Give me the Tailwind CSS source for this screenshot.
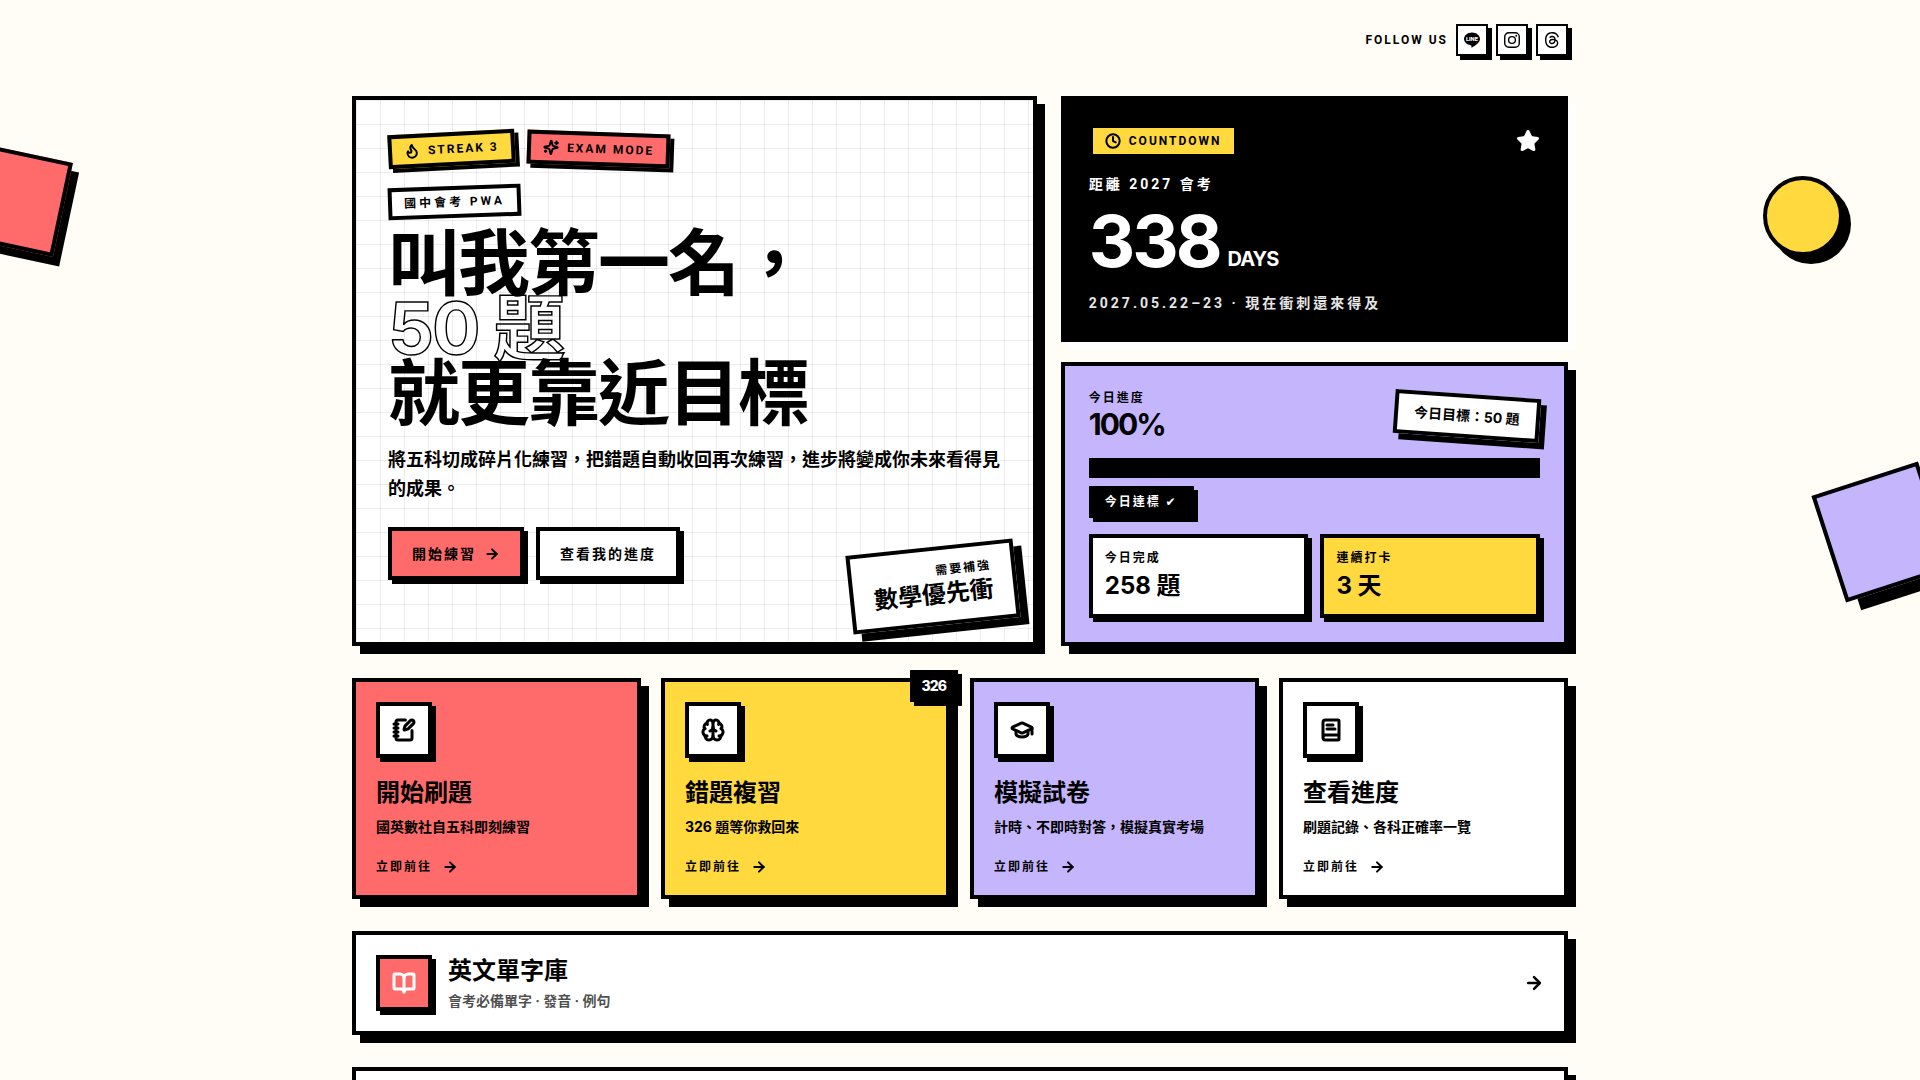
<!DOCTYPE html>
<html lang="zh-Hant">

<head>
  <meta charset="UTF-8" />
  <meta name="viewport" content="width=device-width, initial-scale=1.0">
  <title>國中會考 PWA</title>
  <script src="https://cdn.jsdelivr.net/npm/@tailwindcss/browser@4"></script>
</head>

<body class="relative min-h-screen overflow-x-hidden bg-[#fffdf5] text-black font-bold font-[Inter,'Noto_Sans_CJK_TC',sans-serif]">

  <!-- floating shapes -->
  <div class="absolute -left-8 top-38 size-24 rotate-12 border-4 border-black bg-[#ff6b6b] shadow-[8px_8px_0_0_#000]"></div>
  <div class="absolute right-[4%] top-44 size-20 rounded-full border-4 border-black bg-[#ffd93d] shadow-[8px_8px_0_0_#000]"></div>
  <div class="absolute -right-[18px] top-119 size-28 -rotate-18 border-4 border-black bg-[#c4b5fd] shadow-[12px_12px_0_0_#000]"></div>

  <div class="relative max-w-7xl mx-auto px-8 pt-6 pb-8">

    <header class="flex items-center justify-end gap-2 mb-10">
      <span class="font-[Roboto,sans-serif] text-xs tracking-[2px]">FOLLOW US</span>
      <a href="#" aria-label="LINE" class="size-8 flex items-center justify-center border-2 border-black bg-white shadow-[4px_4px_0_0_#000]">
        <svg class="size-4" viewBox="0 0 24 24">
          <path d="M24 10.3C24 4.9 18.6.6 12 .6S0 4.9 0 10.3c0 4.8 4.27 8.84 10.03 9.6.39.08.92.26 1.06.59.12.3.08.77.04 1.08l-.17 1.02c-.05.3-.24 1.19 1.05.65 1.29-.54 6.95-4.09 9.48-7.01C23.24 14.39 24 12.5 24 10.3z" />
          <text x="12" y="13.5" text-anchor="middle" fill="#fff" font-size="8" font-weight="800">LINE</text>
        </svg>
      </a>
      <a href="#" aria-label="Instagram" class="size-8 flex items-center justify-center border-2 border-black bg-white shadow-[4px_4px_0_0_#000]">
        <svg class="size-4" viewBox="0 0 24 24" fill="none" stroke="currentColor" stroke-width="2.1">
          <rect x="1.1" y="1.1" width="21.8" height="21.8" rx="6" />
          <circle cx="12" cy="12" r="5.1" />
          <circle cx="18.4" cy="5.6" r="1.4" fill="currentColor" stroke="none" />
        </svg>
      </a>
      <a href="#" aria-label="Threads" class="size-8 flex items-center justify-center border-2 border-black bg-white shadow-[4px_4px_0_0_#000]">
        <svg class="size-4" viewBox="0 0 24 24" fill="currentColor">
          <path d="M12.186 24h-.007c-3.581-.024-6.334-1.205-8.184-3.509C2.35 18.44 1.5 15.586 1.472 12.01v-.017c.03-3.579.879-6.43 2.525-8.482C5.845 1.205 8.6.024 12.18 0h.014c2.746.02 5.043.725 6.826 2.098 1.677 1.29 2.858 3.13 3.509 5.467l-2.04.569c-1.104-3.96-3.898-5.984-8.304-6.015-2.91.022-5.11.936-6.54 2.717C4.307 6.504 3.616 8.914 3.589 12c.027 3.086.718 5.496 2.057 7.164 1.43 1.783 3.631 2.698 6.54 2.717 2.623-.02 4.358-.631 5.8-2.045 1.647-1.613 1.618-3.593 1.09-4.798-.31-.71-.873-1.3-1.634-1.75-.192 1.352-.622 2.446-1.284 3.272-.886 1.102-2.14 1.704-3.73 1.79-1.202.065-2.361-.218-3.259-.801-1.063-.689-1.685-1.74-1.752-2.964-.065-1.19.408-2.285 1.33-3.082.88-.76 2.119-1.207 3.583-1.291a13.853 13.853 0 0 1 3.02.142c-.126-.742-.375-1.332-.75-1.757-.513-.586-1.308-.883-2.359-.89h-.029c-.844 0-1.992.232-2.721 1.32L7.734 7.847c.98-1.454 2.568-2.256 4.478-2.256h.044c3.194.02 5.097 1.975 5.287 5.388.108.046.216.094.321.142 1.49.7 2.58 1.761 3.154 3.07.797 1.82.871 4.79-1.548 7.158-1.85 1.81-4.094 2.628-7.277 2.65Zm1.003-11.69c-.242 0-.487.007-.739.021-1.836.103-2.98.946-2.916 2.143.067 1.256 1.452 1.839 2.784 1.767 1.224-.065 2.818-.543 3.086-3.71a10.5 10.5 0 0 0-2.215-.221z" />
        </svg>
      </a>
    </header>

    <main>
      <div class="grid grid-cols-[1.35fr_1fr] gap-6">

        <!-- hero -->
        <section class="relative border-4 border-black bg-white p-8 shadow-[8px_8px_0_0_#000] bg-[linear-gradient(to_right,rgba(0,0,0,0.07)_1px,transparent_1px),linear-gradient(to_bottom,rgba(0,0,0,0.07)_1px,transparent_1px)] bg-[size:24px_24px]">
          <div class="flex gap-3 font-[Roboto,sans-serif]">
            <span class="-rotate-3 inline-flex items-center gap-2 border-4 border-black bg-[#ffd93d] px-3 py-1 text-xs leading-[18px] tracking-[2px] shadow-[4px_4px_0_0_#000]">
              <svg class="size-4" viewBox="0 0 24 24" fill="none" stroke="currentColor" stroke-width="3" stroke-linecap="round" stroke-linejoin="round"><path d="M8.5 14.5A2.5 2.5 0 0 0 11 12c0-1.38-.5-2-1-3-1.072-2.143-.224-4.054 2-6 .5 2.5 2 4.9 4 6.5 2 1.6 3 3.5 3 5.5a7 7 0 1 1-14 0c0-1.153.433-2.294 1-3a2.5 2.5 0 0 0 2.5 2.5z" /></svg>
              STREAK 3
            </span>
            <span class="rotate-2 inline-flex items-center gap-2 border-4 border-black bg-[#ff6b6b] px-3 py-1 text-xs leading-[18px] tracking-[2px] shadow-[4px_4px_0_0_#000]">
              <svg class="size-4" viewBox="0 0 24 24" fill="none" stroke="currentColor" stroke-width="3" stroke-linecap="round" stroke-linejoin="round"><path d="M9.937 15.5A2 2 0 0 0 8.5 14.063l-6.135-1.582a.5.5 0 0 1 0-.962L8.5 9.936A2 2 0 0 0 9.937 8.5l1.582-6.135a.5.5 0 0 1 .963 0L14.063 8.5A2 2 0 0 0 15.5 9.937l6.135 1.581a.5.5 0 0 1 0 .964L15.5 14.063a2 2 0 0 0-1.437 1.437l-1.582 6.135a.5.5 0 0 1-.963 0z" /><path d="M20 3v4" /><path d="M22 5h-4" /><path d="M4 17v2" /><path d="M5 18H3" /></svg>
              EXAM MODE
            </span>
          </div>

          <div class="mt-5 flex">
            <span class="-rotate-2 border-4 border-black bg-white px-3 py-1 font-[Roboto,'Noto_Sans_CJK_TC',sans-serif] text-xs tracking-[3px]">國中會考 PWA</span>
          </div>

          <h1 class="mt-3 text-7xl leading-[65px] tracking-[-2px]">
            叫我第一名，<br>
            <span class="text-transparent [-webkit-text-stroke:0.02em_#000]">50 題</span><br>
            就更靠近目標
          </h1>

          <p class="mt-5 text-lg leading-[29px]">將五科切成碎片化練習，把錯題自動收回再次練習，進步將變成你未來看得見的成果。</p>

          <div class="mt-6 flex gap-3">
            <button class="inline-flex items-center gap-2 border-4 border-black bg-[#ff6b6b] px-5 py-3 text-sm leading-[21px] tracking-[2px] shadow-[4px_4px_0_0_#000]">
              開始練習
              <svg class="size-4" viewBox="0 0 24 24" fill="none" stroke="currentColor" stroke-width="3" stroke-linecap="round" stroke-linejoin="round"><path d="M5 12h14" /><path d="m12 5 7 7-7 7" /></svg>
            </button>
            <button class="border-4 border-black bg-white px-5 py-3 text-sm leading-[21px] tracking-[2px] shadow-[4px_4px_0_0_#000]">查看我的進度</button>
          </div>

          <div class="absolute right-4 bottom-4 -rotate-6 border-4 border-black bg-white px-5 py-3 text-right shadow-[8px_8px_0_0_#000]">
            <p class="text-xs tracking-[2px]">需要補強</p>
            <p class="text-2xl leading-[31px]">數學優先衝</p>
          </div>
        </section>

        <div class="flex flex-col gap-5">
          <!-- countdown -->
          <section class="border-4 border-black bg-black p-6 text-white shadow-[8px_8px_0_0_#fff]">
            <div class="flex items-center justify-between">
              <span class="inline-flex items-center gap-2 border-4 border-black bg-[#ffd93d] px-3 py-1 font-[Roboto,sans-serif] text-xs leading-[18px] tracking-[2px] text-black">
                <svg class="size-4" viewBox="0 0 24 24" fill="none" stroke="currentColor" stroke-width="3" stroke-linecap="round" stroke-linejoin="round"><circle cx="12" cy="12" r="10" /><path d="M12 6v6l4 2" /></svg>
                COUNTDOWN
              </span>
              <svg class="size-6" viewBox="0 0 24 24" fill="currentColor" stroke="currentColor" stroke-width="2" stroke-linejoin="round"><path d="M11.525 2.295a.53.53 0 0 1 .95 0l2.31 4.679a2.123 2.123 0 0 0 1.595 1.16l5.166.756a.53.53 0 0 1 .294.904l-3.736 3.638a2.123 2.123 0 0 0-.611 1.878l.882 5.14a.53.53 0 0 1-.771.56l-4.618-2.428a2.122 2.122 0 0 0-1.973 0L6.396 21.01a.53.53 0 0 1-.77-.56l.881-5.139a2.122 2.122 0 0 0-.611-1.879L2.16 9.795a.53.53 0 0 1 .294-.906l5.165-.755a2.122 2.122 0 0 0 1.597-1.16z" /></svg>
            </div>
            <p class="mt-4 font-[Roboto,'Noto_Sans_CJK_TC',sans-serif] text-sm leading-[21px] tracking-[3px]">距離 2027 會考</p>
            <div class="mt-2.5 flex items-end gap-2">
              <span class="text-7xl leading-none tracking-[-3px]">338</span>
              <span class="pb-1 text-xl tracking-[-1px]">DAYS</span>
            </div>
            <p class="mt-4 font-[Roboto,'Noto_Sans_CJK_TC',sans-serif] text-sm leading-[21px] tracking-[3px] text-white/90">2027.05.22–23 · 現在衝刺還來得及</p>
          </section>

          <!-- today's progress -->
          <section class="border-4 border-black bg-[#c4b5fd] p-6 shadow-[8px_8px_0_0_#000]">
            <div class="flex items-center justify-between">
              <div>
                <p class="text-xs tracking-[2px]">今日進度</p>
                <p class="text-3xl tracking-[-2px]">100%</p>
              </div>
              <span class="rotate-4 border-4 border-black bg-white px-4 py-2 text-sm shadow-[6px_6px_0_0_#000]">今日目標：50 題</span>
            </div>
            <div class="mt-4 h-5 border-4 border-black bg-white" role="progressbar" aria-label="今日進度" aria-valuenow="100">
              <div class="h-full bg-black" style="width:100%"></div>
            </div>
            <div class="mt-2 flex">
              <span class="border-4 border-black bg-black px-3 py-1 text-xs tracking-[2px] text-white shadow-[4px_4px_0_0_#000]">今日達標 <span class="font-['DejaVu_Sans',sans-serif]">✔</span></span>
            </div>
            <div class="mt-4 grid grid-cols-2 gap-3">
              <div class="border-4 border-black bg-white p-3 shadow-[4px_4px_0_0_#000]">
                <p class="text-xs tracking-[2px]">今日完成</p>
                <p class="mt-1 text-2xl">258 題</p>
              </div>
              <div class="border-4 border-black bg-[#ffd93d] p-3 shadow-[4px_4px_0_0_#000]">
                <p class="text-xs tracking-[2px]">連續打卡</p>
                <p class="mt-1 text-2xl">3 天</p>
              </div>
            </div>
          </section>
        </div>
      </div>

      <!-- shortcuts -->
      <nav class="mt-8 grid grid-cols-4 gap-5">
        <a href="#" class="border-4 border-black bg-[#ff6b6b] p-5 shadow-[8px_8px_0_0_#000]">
          <span class="size-14 flex items-center justify-center border-4 border-black bg-white shadow-[4px_4px_0_0_#000]">
            <svg class="size-6" viewBox="0 0 24 24" fill="none" stroke="currentColor" stroke-width="3" stroke-linecap="round" stroke-linejoin="round"><path d="M13.4 2H6a2 2 0 0 0-2 2v16a2 2 0 0 0 2 2h12a2 2 0 0 0 2-2v-7.4" /><path d="M2 6h4" /><path d="M2 10h4" /><path d="M2 14h4" /><path d="M2 18h4" /><path d="M21.378 5.626a1 1 0 1 0-3.004-3.004l-5.01 5.012a2 2 0 0 0-.506.854l-.837 2.87a.5.5 0 0 0 .62.62l2.87-.837a2 2 0 0 0 .854-.506z" /></svg>
          </span>
          <h2 class="mt-4 text-2xl leading-[38px]">開始刷題</h2>
          <p class="mt-1 text-sm leading-[21px]">國英數社自五科即刻練習</p>
          <span class="mt-[22px] flex items-center gap-2.5 text-xs tracking-[2px]">立即前往
            <svg class="size-4" viewBox="0 0 24 24" fill="none" stroke="currentColor" stroke-width="3" stroke-linecap="round" stroke-linejoin="round"><path d="M5 12h14" /><path d="m12 5 7 7-7 7" /></svg>
          </span>
        </a>

        <a href="#" class="relative border-4 border-black bg-[#ffd93d] p-5 shadow-[8px_8px_0_0_#000]">
          <span class="absolute -top-3 -right-3 bg-black px-3 py-1.5 text-sm font-extrabold tracking-[-1px] text-white shadow-[4px_4px_0_0_#000]">326</span>
          <span class="size-14 flex items-center justify-center border-4 border-black bg-white shadow-[4px_4px_0_0_#000]">
            <svg class="size-6" viewBox="0 0 24 24" fill="none" stroke="currentColor" stroke-width="3" stroke-linecap="round" stroke-linejoin="round"><path d="M12 18V5" /><path d="M15 13a4.17 4.17 0 0 1-3-4 4.17 4.17 0 0 1-3 4" /><path d="M17.598 6.5A3 3 0 1 0 12 5a3 3 0 1 0-5.598 1.5" /><path d="M17.997 5.125a4 4 0 0 1 2.526 5.77" /><path d="M18 18a4 4 0 0 0 2-7.464" /><path d="M19.967 17.483A4 4 0 1 1 12 18a4 4 0 1 1-7.967-.517" /><path d="M6 18a4 4 0 0 1-2-7.464" /><path d="M6.003 5.125a4 4 0 0 0-2.526 5.77" /></svg>
          </span>
          <h2 class="mt-4 text-2xl leading-[38px]">錯題複習</h2>
          <p class="mt-1 text-sm leading-[21px]">326 題等你救回來</p>
          <span class="mt-[22px] flex items-center gap-2.5 text-xs tracking-[2px]">立即前往
            <svg class="size-4" viewBox="0 0 24 24" fill="none" stroke="currentColor" stroke-width="3" stroke-linecap="round" stroke-linejoin="round"><path d="M5 12h14" /><path d="m12 5 7 7-7 7" /></svg>
          </span>
        </a>

        <a href="#" class="border-4 border-black bg-[#c4b5fd] p-5 shadow-[8px_8px_0_0_#000]">
          <span class="size-14 flex items-center justify-center border-4 border-black bg-white shadow-[4px_4px_0_0_#000]">
            <svg class="size-6" viewBox="0 0 24 24" fill="none" stroke="currentColor" stroke-width="3" stroke-linecap="round" stroke-linejoin="round"><path d="M21.42 10.922a1 1 0 0 0-.019-1.838L12.83 5.18a2 2 0 0 0-1.66 0L2.6 9.08a1 1 0 0 0 0 1.832l8.57 3.908a2 2 0 0 0 1.66 0z" /><path d="M22 10v6" /><path d="M6 12.5V16a6 3 0 0 0 12 0v-3.5" /></svg>
          </span>
          <h2 class="mt-4 text-2xl leading-[38px]">模擬試卷</h2>
          <p class="mt-1 text-sm leading-[21px]">計時、不即時對答，模擬真實考場</p>
          <span class="mt-[22px] flex items-center gap-2.5 text-xs tracking-[2px]">立即前往
            <svg class="size-4" viewBox="0 0 24 24" fill="none" stroke="currentColor" stroke-width="3" stroke-linecap="round" stroke-linejoin="round"><path d="M5 12h14" /><path d="m12 5 7 7-7 7" /></svg>
          </span>
        </a>

        <a href="#" class="border-4 border-black bg-white p-5 shadow-[8px_8px_0_0_#000]">
          <span class="size-14 flex items-center justify-center border-4 border-black bg-white shadow-[4px_4px_0_0_#000]">
            <svg class="size-6" viewBox="0 0 24 24" fill="none" stroke="currentColor" stroke-width="3" stroke-linecap="round" stroke-linejoin="round"><path d="M4 19.5v-15A2.5 2.5 0 0 1 6.5 2H19a1 1 0 0 1 1 1v18a1 1 0 0 1-1 1H6.5a1 1 0 0 1 0-5H20" /><path d="M8 11h8" /><path d="M8 7h6" /></svg>
          </span>
          <h2 class="mt-4 text-2xl leading-[38px]">查看進度</h2>
          <p class="mt-1 text-sm leading-[21px]">刷題記錄、各科正確率一覽</p>
          <span class="mt-[22px] flex items-center gap-2.5 text-xs tracking-[2px]">立即前往
            <svg class="size-4" viewBox="0 0 24 24" fill="none" stroke="currentColor" stroke-width="3" stroke-linecap="round" stroke-linejoin="round"><path d="M5 12h14" /><path d="m12 5 7 7-7 7" /></svg>
          </span>
        </a>
      </nav>

      <!-- vocabulary -->
      <a href="#" class="mt-8 flex items-center gap-4 border-4 border-black bg-white p-5 shadow-[8px_8px_0_0_#000]">
        <span class="size-14 flex items-center justify-center border-4 border-black bg-[#ff6b6b] text-white shadow-[4px_4px_0_0_#000]">
          <svg class="size-6" viewBox="0 0 24 24" fill="none" stroke="currentColor" stroke-width="3" stroke-linecap="round" stroke-linejoin="round"><path d="M12 7v14" /><path d="M3 18a1 1 0 0 1-1-1V4a1 1 0 0 1 1-1h5a4 4 0 0 1 4 4 4 4 0 0 1 4-4h5a1 1 0 0 1 1 1v13a1 1 0 0 1-1 1h-6a3 3 0 0 0-3 3 3 3 0 0 0-3-3z" /></svg>
        </span>
        <div class="flex-1">
          <h2 class="text-2xl">英文單字庫</h2>
          <p class="mt-1 text-sm text-black/70">會考必備單字 · 發音 · 例句</p>
        </div>
        <svg class="size-5" viewBox="0 0 24 24" fill="none" stroke="currentColor" stroke-width="3" stroke-linecap="round" stroke-linejoin="round"><path d="M5 12h14" /><path d="m12 5 7 7-7 7" /></svg>
      </a>

      <section class="mt-8 min-h-26 border-4 border-black bg-white p-5 shadow-[8px_8px_0_0_#000]"></section>
    </main>
  </div>

</body>

</html>
